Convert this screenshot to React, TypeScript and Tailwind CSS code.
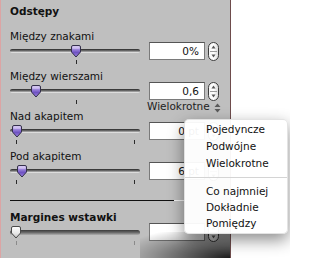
import React from "react";

function Thumb({ light }: { light?: boolean }) {
  return (
    <svg width="12" height="13" viewBox="0 0 12 13" className="block">
      <defs>
        <linearGradient id={light ? "tl" : "tp"} x1="0" y1="0" x2="0" y2="1">
          {light ? (
            <>
              <stop offset="0" stopColor="#ffffff" />
              <stop offset="0.6" stopColor="#e6e6e6" />
              <stop offset="1" stopColor="#bdbdbd" />
            </>
          ) : (
            <>
              <stop offset="0" stopColor="#e4d8f6" />
              <stop offset="0.3" stopColor="#a58ee0" />
              <stop offset="0.6" stopColor="#6f52c2" />
              <stop offset="1" stopColor="#9c84e0" />
            </>
          )}
        </linearGradient>
      </defs>
      <path
        d="M1.5 2 Q1.5 0.5 3 0.5 H9 Q10.5 0.5 10.5 2 V7 L6 12 L1.5 7 Z"
        fill={`url(#${light ? "tl" : "tp"})`}
        stroke={light ? "#4a4a4a" : "#34304a"}
        strokeWidth="1"
      />
      {!light && <path d="M2.5 3 H9.5" stroke="#f0eaff" strokeWidth="1" opacity="0.7" />}
    </svg>
  );
}

function Stepper() {
  return (
    <svg width="11" height="19" viewBox="0 0 11 19" className="block">
      <defs>
        <linearGradient id="sg" x1="0" y1="0" x2="1" y2="0">
          <stop offset="0" stopColor="#f4f4f4" />
          <stop offset="0.5" stopColor="#ffffff" />
          <stop offset="1" stopColor="#d8d8d8" />
        </linearGradient>
      </defs>
      <rect x="0.5" y="0.5" width="10" height="18" rx="5" fill="url(#sg)" stroke="#3c3c3c" />
      <path d="M2 9.5 H9" stroke="#9a9a9a" strokeWidth="1" />
      <path d="M3.5 6.5 L5.5 3.5 L7.5 6.5 Z" fill="#555" />
      <path d="M3.5 12.5 L5.5 15.5 L7.5 12.5 Z" fill="#555" />
    </svg>
  );
}

function UpDown() {
  return (
    <svg width="7" height="10" viewBox="0 0 7 10" className="block">
      <path d="M0.5 4 L3.5 0.5 L6.5 4 Z" fill="#5a5a5a" />
      <path d="M0.5 6 L3.5 9.5 L6.5 6 Z" fill="#5a5a5a" />
    </svg>
  );
}

type SectionProps = {
  label: string;
  bold?: boolean;
  thumbClass: string;
  value: string;
  ticks: string[];
  disabled?: boolean;
  extra?: React.ReactNode;
};

function Section({ label, bold, thumbClass, value, ticks, disabled, extra }: SectionProps) {
  return (
    <div className="flex flex-col">
      <div className={`h-[12px] leading-[12px] text-[#111] ${bold ? "font-bold" : ""}`}>{label}</div>
      <div className="flex h-[18px] items-center">
        <div className="relative w-[132px] h-[18px] flex items-center">
          <div
            className={
              disabled
                ? "w-[130px] h-[5px] rounded-full bg-gradient-to-b from-[#3a3a3a] via-[#6a6a6a] to-[#b0b0b0]"
                : "w-[130px] h-[4px] rounded-full bg-gradient-to-b from-[#4a4a4a] via-[#9a9a9a] to-[#ffffff] border-t border-[#3a3a3a]"
            }
          />
          <div className={`absolute top-[3px] ${thumbClass}`}>
            <Thumb light={disabled} />
          </div>
        </div>
        <div className="ml-[7px] w-[56px] h-[18px] bg-white border border-[#7a7a7a] border-t-[#555] text-right pr-[5px] leading-[16px] text-[#111]">
          {value}
        </div>
        <div className="ml-[3px]">
          <Stepper />
        </div>
      </div>
      <div className="flex h-[10px]">
        <div className="relative w-[132px] h-[10px]">
          {ticks.map((t) => (
            <div key={t} className={`absolute top-0 w-px h-[4px] ${disabled ? "bg-[#8a8a8a]" : "bg-[#2a2a2a]"} ${t}`} />
          ))}
        </div>
        {extra}
      </div>
    </div>
  );
}

export default function App() {
  return (
    <div className="relative w-[290px] h-[258px] overflow-hidden bg-white font-['DejaVu_Sans',sans-serif] text-[10.5px]">
      <div className="w-[231px] h-full bg-[#bfbfbf] border-l border-l-[#dca4a4] border-r border-r-[#6e4c4c] pl-[9px] pt-[5px] flex flex-col">
        <div className="h-[25px] leading-[12px] font-bold text-[#111]">Odstępy</div>
        <Section label="Między znakami" thumbClass="left-[60px]" value="0%" ticks={["left-[66px]"]} />
        <Section
          label="Między wierszami"
          thumbClass="left-[20px]"
          value="0,6"
          ticks={["left-[66px]"]}
          extra={
            <div className="flex items-start ml-[5px] h-[10px] overflow-visible">
              <span className="leading-[13px] text-[#222] whitespace-nowrap">Wielokrotne</span>
              <span className="ml-[4px] mt-[3px]">
                <UpDown />
              </span>
            </div>
          }
        />
        <Section label="Nad akapitem" thumbClass="left-[1px]" value="0 pt" ticks={["left-[6px]", "left-[124px]"]} />
        <Section label="Pod akapitem" thumbClass="left-[6px]" value="6 pt" ticks={["left-[6px]", "left-[124px]"]} />
        <div className="h-[10px]" />
        <div className="flex h-px">
          <div className="w-[164px] h-px bg-[#111]" />
          <div className="w-[12px] h-px bg-[#f4f4f4]" />
        </div>
        <div className="h-[10px]" />
        <Section
          label="Margines wstawki"
          bold
          thumbClass="left-[0px]"
          value=""
          ticks={["left-[6px]", "left-[124px]"]}
          disabled
        />
      </div>

      <div className="absolute left-[140px] top-[232px] w-[90px] h-[26px] bg-[radial-gradient(ellipse_at_bottom_right,rgba(0,0,0,0.85),rgba(0,0,0,0.25)_60%,rgba(0,0,0,0)_90%)]" />

      <div className="absolute left-[184px] top-[119px] w-[104px] h-[115px] rounded-[5px] bg-white/95 border border-[#d0d0d0]/60 shadow-[0_6px_16px_rgba(0,0,0,0.45)] text-[#111] flex flex-col">
        <div className="h-[1px]" />
        <div className="h-[17px] leading-[17px] pl-[21px]">Pojedyncze</div>
        <div className="h-[17px] leading-[17px] pl-[21px]">Podwójne</div>
        <div className="h-[17px] leading-[17px] pl-[21px]">Wielokrotne</div>
        <div className="h-[11px] flex items-center">
          <div className="w-full h-px bg-[#d4d4d4]" />
        </div>
        <div className="h-[16px] leading-[16px] pl-[21px]">Co najmniej</div>
        <div className="h-[16px] leading-[16px] pl-[21px]">Dokładnie</div>
        <div className="h-[16px] leading-[16px] pl-[21px]">Pomiędzy</div>
      </div>
    </div>
  );
}
